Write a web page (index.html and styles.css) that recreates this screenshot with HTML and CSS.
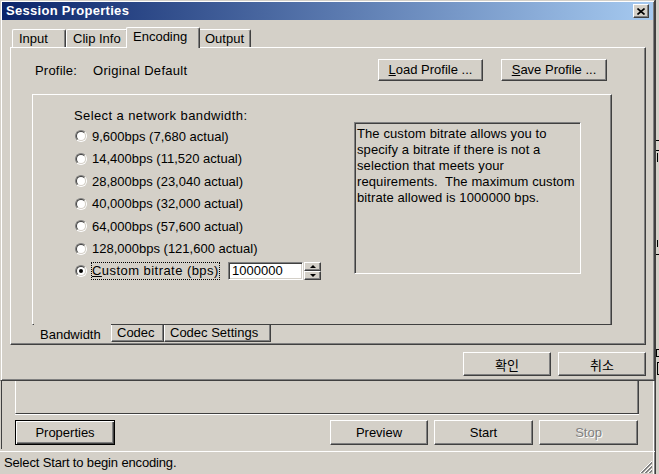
FILE: index.html
```html
<!DOCTYPE html>
<html>
<head>
<meta charset="utf-8">
<title>Session Properties</title>
<link rel="stylesheet" href="styles.css">
</head>
<body>
<div class="desktop">
  <div class="mainwin">
    <div class="main-body">
      <div class="group"></div>
      <div class="actions">
        <div class="btn btn-default w100">Properties</div>
        <div class="actions-right">
          <div class="btn w98">Preview</div>
          <div class="btn w99">Start</div>
          <div class="btn w99 disabled">Stop</div>
        </div>
      </div>
    </div>
    <div class="statusbar">
      <span class="status-text">Select Start to begin encoding.</span>
      <svg class="grip" width="12" height="12" viewBox="0 0 12 12">
        <path d="M12 0 L0 12 M12 4 L4 12 M12 8 L8 12" stroke="#ffffff" stroke-width="1" fill="none"/>
        <path d="M12 1 L1 12 M12 2 L2 12 M12 5 L5 12 M12 6 L6 12 M12 9 L9 12 M12 10 L10 12" stroke="#808080" stroke-width="1" fill="none"/>
      </svg>
    </div>
  </div>

  <div class="frag f1"></div>
  <div class="frag f2"></div>
  <div class="frag f3"></div>
  <div class="frag f4"></div>
  <div class="frag f5"></div>
  <div class="frag f6"></div>
  <div class="frag f7"></div>

  <div class="dialog">
    <div class="titlebar">
      <span class="title">Session Properties</span>
      <div class="close-btn">
        <svg width="8" height="7" viewBox="0 0 8 7">
          <path d="M0.5 0.5 L7.5 6.5 M7.5 0.5 L0.5 6.5" stroke="#000" stroke-width="1.6" fill="none"/>
        </svg>
      </div>
    </div>

    <div class="tabs">
      <div class="tab tw-input">Input</div>
      <div class="tab tw-clip">Clip Info</div>
      <div class="tab tw-enc active">Encoding</div>
      <div class="tab tw-out">Output</div>
    </div>

    <div class="panel">
      <div class="profile-row">
        <span class="profile-label">Profile:</span>
        <span class="profile-value">Original Default</span>
        <div class="btn w105 load-btn"><span><u>L</u>oad Profile ...</span></div>
        <div class="btn w106"><span><u>S</u>ave Profile ...</span></div>
      </div>

      <div class="subbox">
        <div class="bw-col">
          <div class="bw-head">Select a network bandwidth:</div>
          <div class="opt"><span class="radio"></span><span>9,600bps (7,680 actual)</span></div>
          <div class="opt"><span class="radio"></span><span>14,400bps (11,520 actual)</span></div>
          <div class="opt"><span class="radio"></span><span>28,800bps (23,040 actual)</span></div>
          <div class="opt"><span class="radio"></span><span>40,000bps (32,000 actual)</span></div>
          <div class="opt"><span class="radio"></span><span>64,000bps (57,600 actual)</span></div>
          <div class="opt"><span class="radio"></span><span>128,000bps (121,600 actual)</span></div>
          <div class="opt">
            <span class="radio checked"></span>
            <span class="focus"><u>C</u>ustom bitrate (bps)</span>
            <div class="field">1000000</div>
            <div class="spin">
              <div class="spin-btn"><span class="tri-up"></span></div>
              <div class="spin-btn"><span class="tri-down"></span></div>
            </div>
          </div>
        </div>
        <div class="desc">The custom bitrate allows you to<br>specify a bitrate if there is not a<br>selection that meets your<br>requirements.&nbsp; The maximum custom<br>bitrate allowed is 1000000 bps.</div>
      </div>

      <div class="subtabs">
        <div class="subtab active">Bandwidth</div>
        <div class="subtab sw-codec">Codec</div>
        <div class="subtab sw-settings">Codec Settings</div>
      </div>
    </div>

    <div class="dlg-actions">
      <div class="btn w88 kr">확인</div>
      <div class="btn w88 kr">취소</div>
    </div>
  </div>
</div>
</body>
</html>
```

FILE: styles.css
```css
* { box-sizing: border-box; }

html, body {
  margin: 0;
  padding: 0;
}

body {
  width: 659px;
  height: 474px;
  overflow: hidden;
  background: #d4d0c8;
  font-family: "Liberation Sans", Arial, sans-serif;
  font-size: 13px;
  color: #000;
}

.desktop {
  position: relative;
  width: 659px;
  height: 474px;
}

/* ---------- classic button ---------- */
.btn {
  display: flex;
  align-items: center;
  justify-content: center;
  background: #d4d0c8;
  border: 1px solid;
  border-color: #ffffff #404040 #404040 #ffffff;
  box-shadow: inset -1px -1px #808080;
  white-space: nowrap;
  line-height: 16px;
}

.btn-default {
  border-color: #000;
  box-shadow: inset 1px 1px #ffffff, inset -1px -1px #404040, inset -2px -2px #808080;
}

.btn.disabled {
  color: #808080;
  text-shadow: 1px 1px #ffffff;
}

.w88 { width: 88px; height: 24px; }
.w98 { width: 98px; height: 25px; }
.w99 { width: 99px; height: 25px; }
.w100 { width: 100px; height: 25px; }
.w105 { width: 105px; height: 22px; }
.w106 { width: 106px; height: 22px; }

.kr {
  font-family: "Noto Sans CJK KR", "Liberation Sans", sans-serif;
  font-size: 13px;
  padding-top: 1px;
}

/* ---------- background main window ---------- */
.mainwin {
  position: absolute;
  left: 0;
  top: 0;
  width: 656px;
  height: 474px;
  display: flex;
  flex-direction: column;
  justify-content: flex-end;
  border-right: 1px solid #404040;
  box-shadow: inset -1px 0 #808080, inset -2px 0 #ffffff;
}

.main-body {
  margin-left: 1px;
  border-left: 1px solid #404040;
  padding: 0 16px 4px 13px;
}

.group {
  height: 33px;
  border-left: 1px solid #ffffff;
  border-right: 1px solid #404040;
  border-bottom: 1px solid #404040;
  box-shadow: inset -1px 0 #808080, 0 1px #ffffff;
  margin-bottom: 6px;
}

.actions {
  display: flex;
  padding-right: 1px;
}

.actions-right {
  margin-left: auto;
  display: flex;
  gap: 6px;
}

.statusbar {
  margin-top: 2px;
  height: 23px;
  border-top: 1px solid #ffffff;
  display: flex;
  align-items: center;
  padding: 0 3px 0 4px;
}

.status-text {
  line-height: 16px;
  padding-bottom: 1px;
  letter-spacing: -0.15px;
}

.grip {
  margin-left: auto;
  align-self: flex-end;
  margin-bottom: 1px;
}

/* fragments of another window at the right edge */
.frag {
  position: absolute;
  background: #000;
}
.f1 { left: 656px; top: 140px; width: 3px; height: 1px; }
.f2 { left: 656px; top: 150px; width: 3px; height: 1px; }
.f3 { left: 657px; top: 153px; width: 1px; height: 9px; }
.f4 { left: 657px; top: 240px; width: 1px; height: 7px; }
.f5 { left: 656px; top: 254px; width: 3px; height: 1px; }
.f6 { left: 656px; top: 349px; width: 3px; height: 8px; background: transparent; border: 1px solid #000; border-right: none; }
.f7 { left: 657px; top: 362px; width: 2px; height: 13px; background: transparent; border-left: 1px solid #000; border-top: 1px solid #000; border-bottom: 1px solid #000; }

/* ---------- dialog ---------- */
.dialog {
  position: absolute;
  left: 0;
  top: 0;
  width: 655px;
  height: 381px;
  background: #d4d0c8;
  border: 1px solid;
  border-color: #d4d0c8 #404040 #404040 #d4d0c8;
  box-shadow: inset 1px 1px #ffffff, inset -1px -1px #808080;
  padding: 1px;
}

.titlebar {
  height: 18px;
  display: flex;
  align-items: center;
  background: linear-gradient(to right, #0a246a, #a6caf0);
  padding: 0 4px 0 4px;
}

.title {
  color: #ffffff;
  font-weight: bold;
  font-size: 13px;
  line-height: 16px;
  letter-spacing: 0.3px;
}

.close-btn {
  margin-left: auto;
  width: 16px;
  height: 14px;
  background: #d4d0c8;
  border: 1px solid;
  border-color: #ffffff #404040 #404040 #ffffff;
  box-shadow: inset -1px -1px #808080;
  display: flex;
  align-items: center;
  justify-content: center;
}

/* ---------- top tabs ---------- */
.tabs {
  display: flex;
  align-items: flex-end;
  height: 20px;
  margin: 7px 0 0 10px;
}

.tab {
  height: 18px;
  padding: 0 0 1px 6px;
  display: flex;
  align-items: center;
  border-top: 1px solid #ffffff;
  border-left: 1px solid #ffffff;
  border-right: 1px solid #404040;
  box-shadow: inset -1px 0 #808080;
  border-radius: 2px 2px 0 0;
  background: #d4d0c8;
  white-space: nowrap;
}

.tw-input { width: 54px; }
.tw-clip { width: 62px; }
.tw-enc { width: 74px; }
.tw-out { width: 53px; }

.tab.active {
  height: 21px;
  margin: 0 -2px -1px -2px;
  padding-bottom: 3px;
  position: relative;
  z-index: 1;
}

/* ---------- panel ---------- */
.panel {
  margin-left: 8px;
  width: 636px;
  height: 298px;
  border-top: 1px solid #ffffff;
  border-left: 1px solid #ffffff;
  border-right: 1px solid #404040;
  border-bottom: 1px solid #404040;
  box-shadow: inset -1px -1px #808080;
}

.profile-row {
  margin-top: 11px;
  height: 22px;
  display: flex;
  align-items: center;
  padding: 0 38px 0 24px;
}

.profile-label {
  margin-right: 16px;
  letter-spacing: 0.2px;
}

.profile-value {
  letter-spacing: 0.3px;
}

.load-btn {
  margin-left: auto;
  margin-right: 18px;
}

.subbox {
  margin: 13px 0 0 21px;
  width: 580px;
  height: 231px;
  display: flex;
  border-top: 1px solid #ffffff;
  border-left: 1px solid #ffffff;
  border-right: 1px solid #404040;
  border-bottom: 1px solid #404040;
  box-shadow: inset -1px 0 #808080;
}

.bw-col {
  width: 321px;
  padding: 11px 0 0 41px;
}

.bw-head {
  height: 19px;
  line-height: 19px;
  letter-spacing: 0.4px;
  white-space: nowrap;
}

.opt {
  height: 22.5px;
  display: flex;
  align-items: center;
  white-space: nowrap;
}

.radio {
  position: relative;
  flex: none;
  width: 12px;
  height: 12px;
  margin: 0 5px 0 1px;
  border-radius: 50%;
  border: 1px solid;
  border-color: #808080 #ffffff #ffffff #808080;
}

.radio::before {
  content: "";
  position: absolute;
  inset: 0;
  border-radius: 50%;
  border: 1px solid;
  border-color: #404040 #d4d0c8 #d4d0c8 #404040;
  background: #ffffff;
}

.radio.checked::after {
  content: "";
  position: absolute;
  left: 3px;
  top: 3px;
  width: 4px;
  height: 4px;
  border-radius: 50%;
  background: #000;
}

.radio.checked {
  margin-right: 4px;
}

.focus {
  flex: none;
  width: 129px;
  border: 1px dotted #000;
  line-height: 16px;
  letter-spacing: 0.45px;
}

.field {
  margin-left: 8px;
  width: 75px;
  height: 18px;
  background: #ffffff;
  border: 1px solid;
  border-color: #808080 #ffffff #ffffff #808080;
  box-shadow: inset 1px 1px #404040, inset -1px -1px #d4d0c8;
  padding: 0 0 0 3px;
  line-height: 16px;
}

.spin {
  margin-left: 1px;
  width: 17px;
  height: 18px;
  display: flex;
  flex-direction: column;
}

.spin-btn {
  height: 9px;
  display: flex;
  align-items: center;
  justify-content: center;
  background: #d4d0c8;
  border: 1px solid;
  border-color: #ffffff #404040 #404040 #ffffff;
  box-shadow: inset -1px -1px #808080;
}

.tri-up {
  width: 0;
  height: 0;
  border-left: 3px solid transparent;
  border-right: 3px solid transparent;
  border-bottom: 3px solid #000;
}

.tri-down {
  width: 0;
  height: 0;
  border-left: 3px solid transparent;
  border-right: 3px solid transparent;
  border-top: 3px solid #000;
}

.desc {
  margin-top: 27px;
  width: 227px;
  height: 152px;
  border: 1px solid;
  border-color: #808080 #ffffff #ffffff #808080;
  box-shadow: inset 1px 1px #404040, inset -1px -1px #d4d0c8;
  padding: 3px 0 0 2px;
  line-height: 16px;
  white-space: nowrap;
  letter-spacing: 0.1px;
}

/* ---------- bottom tabs ---------- */
.subtabs {
  display: flex;
  align-items: flex-start;
  height: 18px;
  margin-left: 23px;
}

.subtab {
  height: 17px;
  line-height: 15px;
  padding-left: 5px;
  border-left: 1px solid #ffffff;
  border-right: 1px solid #404040;
  border-bottom: 1px solid #404040;
  box-shadow: inset -1px -1px #808080;
  white-space: nowrap;
}

.subtab.active {
  width: 77px;
  height: 19px;
  margin-top: -1px;
  padding-top: 3px;
  border-color: transparent;
  box-shadow: none;
  background: #d4d0c8;
  position: relative;
  z-index: 1;
}

.sw-codec { width: 53px; }
.sw-settings { width: 107px; }

/* ---------- dialog buttons ---------- */
.dlg-actions {
  margin-top: 7px;
  display: flex;
  justify-content: flex-end;
  gap: 7px;
  padding-right: 7px;
}
```
